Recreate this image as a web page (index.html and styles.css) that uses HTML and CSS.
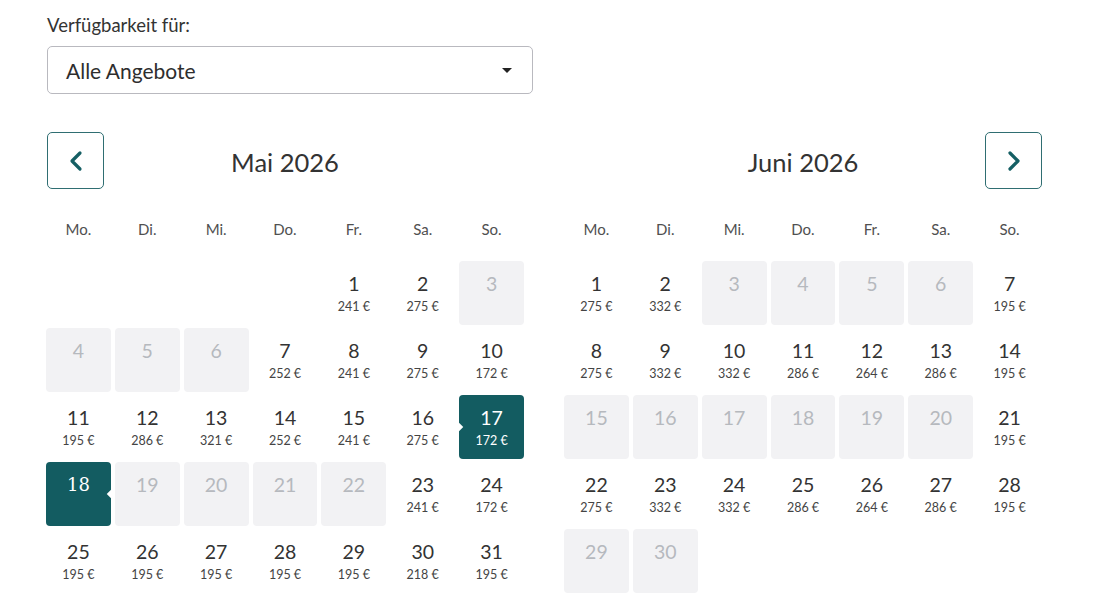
FILE: index.html
```html
<!DOCTYPE html>
<html lang="de">
<head>
<meta charset="utf-8">
<title>Verfügbarkeit</title>
<link rel="stylesheet" href="styles.css">
</head>
<body>
<div class="page">
  <label class="field-label">Verfügbarkeit für:</label>
  <div class="select">
    <span class="select-value">Alle Angebote</span>
    <span class="select-caret"></span>
  </div>

  <div class="months">
    <section class="month">
      <header class="month-head">
        <button class="nav nav-prev" aria-label="Vorheriger Monat">
          <svg width="16" height="22" viewBox="0 0 16 22"><path d="M12 3 L4 11 L12 19" fill="none" stroke="#155f64" stroke-width="3.2" stroke-linecap="round" stroke-linejoin="round"/></svg>
        </button>
        <h2 class="month-title">Mai 2026</h2>
        <span></span>
      </header>
      <div class="weekdays">
        <span>Mo.</span><span>Di.</span><span>Mi.</span><span>Do.</span><span>Fr.</span><span>Sa.</span><span>So.</span>
      </div>
      <div class="days">
        <div class="day empty"></div><div class="day empty"></div><div class="day empty"></div><div class="day empty"></div>
        <div class="day"><span class="num">1</span><span class="price">241 €</span></div>
        <div class="day"><span class="num">2</span><span class="price">275 €</span></div>
        <div class="day off"><span class="num">3</span></div>

        <div class="day off"><span class="num">4</span></div>
        <div class="day off"><span class="num">5</span></div>
        <div class="day off"><span class="num">6</span></div>
        <div class="day"><span class="num">7</span><span class="price">252 €</span></div>
        <div class="day"><span class="num">8</span><span class="price">241 €</span></div>
        <div class="day"><span class="num">9</span><span class="price">275 €</span></div>
        <div class="day"><span class="num">10</span><span class="price">172 €</span></div>

        <div class="day"><span class="num">11</span><span class="price">195 €</span></div>
        <div class="day"><span class="num">12</span><span class="price">286 €</span></div>
        <div class="day"><span class="num">13</span><span class="price">321 €</span></div>
        <div class="day"><span class="num">14</span><span class="price">252 €</span></div>
        <div class="day"><span class="num">15</span><span class="price">241 €</span></div>
        <div class="day"><span class="num">16</span><span class="price">275 €</span></div>
        <div class="day sel notch-left"><span class="num">17</span><span class="price">172 €</span></div>

        <div class="day sel notch-right"><span class="num serif">18</span></div>
        <div class="day off"><span class="num">19</span></div>
        <div class="day off"><span class="num">20</span></div>
        <div class="day off"><span class="num">21</span></div>
        <div class="day off"><span class="num">22</span></div>
        <div class="day"><span class="num">23</span><span class="price">241 €</span></div>
        <div class="day"><span class="num">24</span><span class="price">172 €</span></div>

        <div class="day"><span class="num">25</span><span class="price">195 €</span></div>
        <div class="day"><span class="num">26</span><span class="price">195 €</span></div>
        <div class="day"><span class="num">27</span><span class="price">195 €</span></div>
        <div class="day"><span class="num">28</span><span class="price">195 €</span></div>
        <div class="day"><span class="num">29</span><span class="price">195 €</span></div>
        <div class="day"><span class="num">30</span><span class="price">218 €</span></div>
        <div class="day"><span class="num">31</span><span class="price">195 €</span></div>
      </div>
    </section>

    <section class="month">
      <header class="month-head">
        <span></span>
        <h2 class="month-title">Juni 2026</h2>
        <button class="nav nav-next" aria-label="Nächster Monat">
          <svg width="16" height="22" viewBox="0 0 16 22"><path d="M4 3 L12 11 L4 19" fill="none" stroke="#155f64" stroke-width="3.2" stroke-linecap="round" stroke-linejoin="round"/></svg>
        </button>
      </header>
      <div class="weekdays">
        <span>Mo.</span><span>Di.</span><span>Mi.</span><span>Do.</span><span>Fr.</span><span>Sa.</span><span>So.</span>
      </div>
      <div class="days">
        <div class="day"><span class="num">1</span><span class="price">275 €</span></div>
        <div class="day"><span class="num">2</span><span class="price">332 €</span></div>
        <div class="day off"><span class="num">3</span></div>
        <div class="day off"><span class="num">4</span></div>
        <div class="day off"><span class="num">5</span></div>
        <div class="day off"><span class="num">6</span></div>
        <div class="day"><span class="num">7</span><span class="price">195 €</span></div>

        <div class="day"><span class="num">8</span><span class="price">275 €</span></div>
        <div class="day"><span class="num">9</span><span class="price">332 €</span></div>
        <div class="day"><span class="num">10</span><span class="price">332 €</span></div>
        <div class="day"><span class="num">11</span><span class="price">286 €</span></div>
        <div class="day"><span class="num">12</span><span class="price">264 €</span></div>
        <div class="day"><span class="num">13</span><span class="price">286 €</span></div>
        <div class="day"><span class="num">14</span><span class="price">195 €</span></div>

        <div class="day off"><span class="num">15</span></div>
        <div class="day off"><span class="num">16</span></div>
        <div class="day off"><span class="num">17</span></div>
        <div class="day off"><span class="num">18</span></div>
        <div class="day off"><span class="num">19</span></div>
        <div class="day off"><span class="num">20</span></div>
        <div class="day"><span class="num">21</span><span class="price">195 €</span></div>

        <div class="day"><span class="num">22</span><span class="price">275 €</span></div>
        <div class="day"><span class="num">23</span><span class="price">332 €</span></div>
        <div class="day"><span class="num">24</span><span class="price">332 €</span></div>
        <div class="day"><span class="num">25</span><span class="price">286 €</span></div>
        <div class="day"><span class="num">26</span><span class="price">264 €</span></div>
        <div class="day"><span class="num">27</span><span class="price">286 €</span></div>
        <div class="day"><span class="num">28</span><span class="price">195 €</span></div>

        <div class="day off"><span class="num">29</span></div>
        <div class="day off"><span class="num">30</span></div>
      </div>
    </section>
  </div>
</div>
</body>
</html>
```

FILE: styles.css
```css
* { box-sizing: border-box; }

html, body {
  margin: 0;
  padding: 0;
  background: #ffffff;
}

body {
  font-family: "Lato", "Noto Sans", "Liberation Sans", sans-serif;
  color: #333333;
}

.page {
  padding: 14px 0 0 46px;
  width: 1100px;
}

.field-label {
  display: block;
  margin-left: 1px;
  font-size: 18.5px;
  line-height: 23px;
  color: #333;
}

.select {
  margin: 9px 0 0 1px;
  width: 486px;
  height: 48px;
  border: 1px solid #b9b9bf;
  border-radius: 5px;
  display: flex;
  align-items: center;
  justify-content: space-between;
  padding: 0 20px 0 18px;
}

.select-value {
  font-size: 21px;
  color: #2e2e2e;
}

.select-caret {
  width: 0;
  height: 0;
  border-left: 5px solid transparent;
  border-right: 5px solid transparent;
  border-top: 5px solid #222;
}

.months {
  display: flex;
  gap: 40px;
  margin-top: 37px;
}

.month {
  width: 478px;
}

.month-head {
  display: grid;
  grid-template-columns: 58px 1fr 58px;
  align-items: end;
  height: 58px;
}

.month-title {
  margin: 0;
  align-self: center;
  padding-top: 4px;
  text-align: center;
  font-weight: 400;
  font-size: 25.5px;
  color: #333;
}

.nav {
  width: 57px;
  height: 57px;
  border: 1.5px solid #2f6e72;
  border-radius: 5px;
  background: #fff;
  display: flex;
  align-items: center;
  justify-content: center;
  padding: 0;
}

.nav-prev { margin-left: 1px; }
.nav-next { justify-self: end; }

.weekdays {
  display: grid;
  grid-template-columns: repeat(7, 1fr);
  column-gap: 4px;
  padding-top: 30px;
  height: 72px;
  font-size: 15px;
  line-height: 20px;
  color: #505050;
  text-align: center;
}

.days {
  display: grid;
  grid-template-columns: repeat(7, 1fr);
  grid-auto-rows: 64px;
  column-gap: 4px;
  row-gap: 3px;
}

.day {
  position: relative;
  display: flex;
  flex-direction: column;
  align-items: center;
  padding-top: 12px;
  border-radius: 4px;
}

.num {
  font-size: 19.5px;
  line-height: 22px;
  color: #333;
}

.price {
  margin-top: 5px;
  font-size: 12.5px;
  line-height: 14px;
  color: #444;
}

.day.off {
  background: #f2f2f4;
}

.day.off .num {
  color: #b6b9be;
}

.day.sel {
  background: #135c61;
}

.day.sel .num,
.day.sel .price {
  color: #ffffff;
}

.num.serif {
  font-family: "DejaVu Serif", "Liberation Serif", serif;
  font-size: 18px;
}

.notch-left::before,
.notch-right::after {
  content: "";
  position: absolute;
  top: 50%;
  width: 6px;
  height: 6px;
  margin-top: -3px;
  background: #fff;
  transform: rotate(45deg);
}

.notch-left::before { left: -3px; }
.notch-right::after { right: -3px; }
```
